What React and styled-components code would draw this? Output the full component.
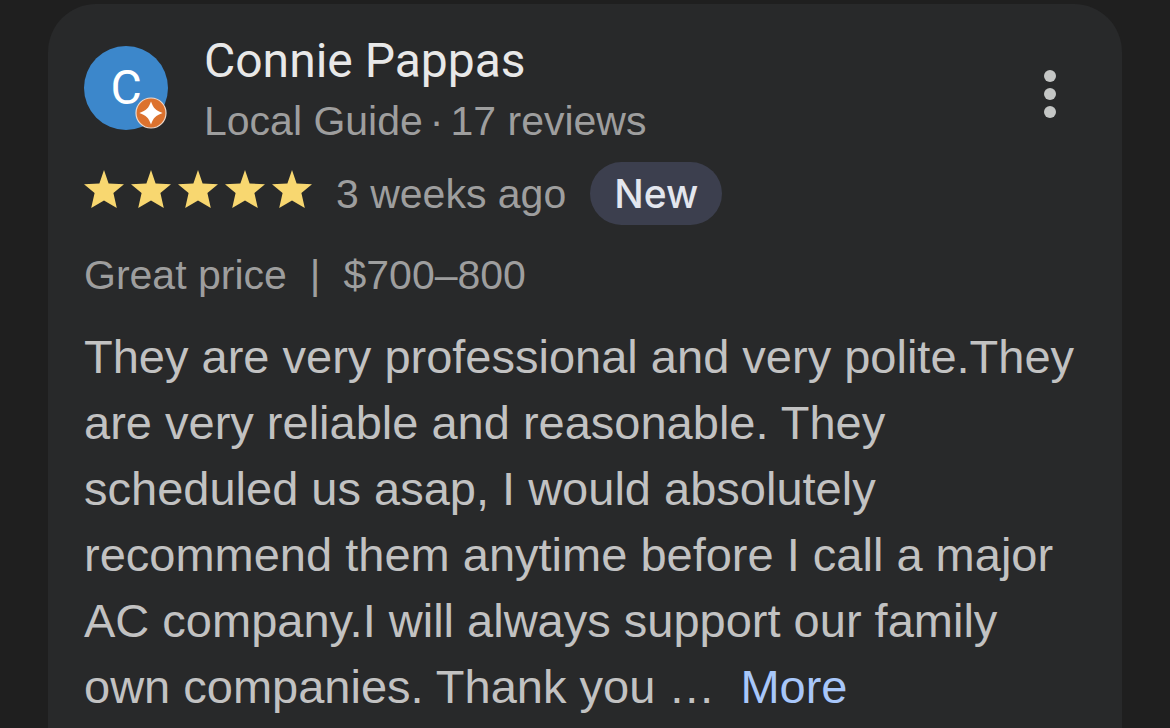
import React from "react";
import styled, { createGlobalStyle } from "styled-components";

const GlobalStyle = createGlobalStyle`
  * { box-sizing: border-box; }
  body {
    margin: 0;
    background: #1f1f1f;
    font-family: "Liberation Sans", Helvetica, Arial, sans-serif;
  }
`;

const Page = styled.main`
  display: flex;
  flex-direction: column;
  height: 100vh;
  padding: 4px 48px 0;
  overflow: hidden;
`;

const Card = styled.article`
  flex: 1 0 auto;
  padding: 27px 36px 0;
  border-radius: 48px 48px 0 0;
  background: #28292a;
`;

const Header = styled.header`
  display: flex;
  align-items: center;
  gap: 36px;
`;

const Avatar = styled.div`
  position: relative;
  flex: none;
  display: flex;
  align-items: center;
  justify-content: center;
  width: 84px;
  height: 84px;
  margin-bottom: 6px;
  border-radius: 50%;
  background: #3c87cb;
  color: #fff;
  font: 400 48px/84px Roboto, sans-serif;
`;

const GuideBadge = styled.svg`
  position: absolute;
  right: 0;
  bottom: 0;
  width: 34px;
  height: 34px;
`;

const Author = styled.div`
  flex: 1;
  min-width: 0;
`;

const Name = styled.h2`
  margin: 0;
  color: #e8e8e8;
  font: 400 48px/60px Roboto, sans-serif;
`;

const Muted = styled.span`
  color: #9e9e9e;
  font-size: 41px;
  line-height: 60px;
`;

const Details = styled.div`
  display: flex;
  gap: 7px;
`;

const MenuButton = styled.button`
  display: flex;
  align-items: center;
  justify-content: center;
  width: 72px;
  height: 72px;
  margin-top: 6px;
  padding: 0;
  border: 0;
  background: none;
  color: #c4c6c5;
`;

const RatingRow = styled.div`
  display: flex;
  align-items: center;
  gap: 24px;
  margin-top: 11px;
`;

const Stars = styled.div`
  display: flex;
  gap: 7px;
  padding-bottom: 9px;
`;

const NewTag = styled.span`
  padding: 0 24px;
  border-radius: 32px;
  background: #3c3f4e;
  color: #e3e6ee;
  font: 500 39px/63px Inter, sans-serif;
`;

const PriceRow = styled.div`
  display: flex;
  gap: 23px;
  margin-top: 20px;
`;

const Body = styled.p`
  margin: 19px 0 0;
  color: #c2c2c2;
  font-size: 47px;
  line-height: 66px;
`;

const MoreLink = styled.a`
  margin-left: 12px;
  color: #a8c7fa;
  text-decoration: none;
`;

const Star = () => (
  <svg width="40" height="38" viewBox="0 0 40 38" aria-hidden="true">
    <path
      fill="#f8d770"
      d="M20 0 24.6 13.6 40 14.2 29.4 23 32.8 38 20 30.6 7.2 38 10.6 23 0 14.2 15.4 13.6Z"
    />
  </svg>
);

export default function App() {
  return (
    <>
      <GlobalStyle />
      <Page>
        <Card>
          <Header>
            <Avatar>
              C
              <GuideBadge viewBox="0 0 34 34" aria-hidden="true">
                <circle cx="17" cy="17" r="15" fill="#dc722e" stroke="#efd9cc" strokeWidth="1.2" />
                <path
                  fill="#fff"
                  d="M17 5.5C19.4 12.4 21.6 14.4 28.6 17 21.6 19.6 19.4 21.6 17 28.5 14.6 21.6 12.4 19.6 5.4 17 12.4 14.4 14.6 12.4 17 5.5Z"
                />
              </GuideBadge>
            </Avatar>
            <Author>
              <Name>Connie Pappas</Name>
              <Details>
                <Muted>Local Guide</Muted>
                <Muted>·</Muted>
                <Muted>17 reviews</Muted>
              </Details>
            </Author>
            <MenuButton type="button" aria-label="More options">
              <svg width="12" height="48" viewBox="0 0 12 48" fill="currentColor" aria-hidden="true">
                <circle cx="6" cy="6" r="6" />
                <circle cx="6" cy="24" r="6" />
                <circle cx="6" cy="42" r="6" />
              </svg>
            </MenuButton>
          </Header>
          <RatingRow>
            <Stars role="img" aria-label="5 out of 5 stars">
              {[1, 2, 3, 4, 5].map((n) => (
                <Star key={n} />
              ))}
            </Stars>
            <Muted>3 weeks ago</Muted>
            <NewTag>New</NewTag>
          </RatingRow>
          <PriceRow>
            <Muted>Great price</Muted>
            <Muted>|</Muted>
            <Muted>$700–800</Muted>
          </PriceRow>
          <Body>
            They are very professional and very polite.They are very reliable and reasonable. They
            scheduled us asap, I would absolutely recommend them anytime before I call a major AC
            company.I will always support our family own companies. Thank you …{" "}
            <MoreLink href="#more">More</MoreLink>
          </Body>
        </Card>
      </Page>
    </>
  );
}
